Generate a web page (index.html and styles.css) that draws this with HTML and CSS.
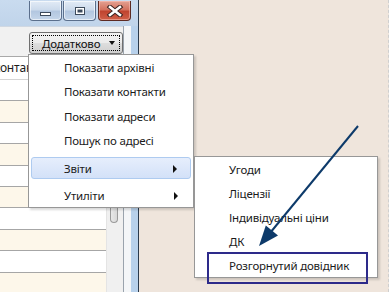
FILE: index.html
```html
<!DOCTYPE html>
<html>
<head>
<meta charset="utf-8">
<link rel="stylesheet" href="styles.css">
</head>
<body>
<div class="screen">
  <div class="window">
    <div class="titlebar">
      <div class="capbtns">
        <div class="capbtn min"><span class="min-ico"></span></div>
        <div class="capbtn max"><span class="max-ico"></span></div>
        <div class="capbtn close">
          <svg width="18" height="12" viewBox="0 0 18 12"><path d="M4 2 L14 10 M14 2 L4 10" stroke="#3a2320" stroke-width="4.6" stroke-linecap="square"/><path d="M4 2 L14 10 M14 2 L4 10" stroke="#ffffff" stroke-width="2.6" stroke-linecap="square"/></svg>
        </div>
      </div>
    </div>
    <div class="client">
      <div class="content">
        <div class="toolbar">
          <div class="more"><div class="focus"><span class="more-label">Додатково</span><span class="caret"></span></div></div>
        </div>
        <div class="grid">
          <div class="rows">
            <div class="hdr">контакти</div>
            <div class="row"></div>
            <div class="row alt"></div>
            <div class="row"></div>
            <div class="row alt"></div>
            <div class="row"></div>
            <div class="row alt"></div>
            <div class="row"></div>
            <div class="row alt"></div>
            <div class="row"></div>
            <div class="row alt"></div>
          </div>
          <div class="vscroll"><div class="thumb"></div></div>
        </div>
      </div>
      <div class="inner-edge"></div>
      <div class="frame"></div>
    </div>
  </div>
  <div class="desktop"></div>

  <div class="menu main">
    <div class="item">Показати архівні</div>
    <div class="item">Показати контакти</div>
    <div class="item">Показати адреси</div>
    <div class="item">Пошук по адресі</div>
    <div class="item sub hot">Звіти<span class="arr"></span></div>
    <div class="item sub last">Утиліти<span class="arr"></span></div>
  </div>

  <div class="menu submenu">
    <div class="item">Угоди</div>
    <div class="item">Ліцензії</div>
    <div class="item">Індивідуальні ціни</div>
    <div class="item">ДК</div>
    <div class="item">Розгорнутий довідник</div>
    <div class="mark"></div>
  </div>

  <svg class="pointer" width="389" height="292" viewBox="0 0 389 292">
    <line x1="358" y1="126" x2="270" y2="233" stroke="#0d3a6a" stroke-width="2"/>
    <polygon points="259,246 265.8,225.6 278,235.6" fill="#0d3a6a"/>
  </svg>
</div>
</body>
</html>
```
FILE: styles.css
```css
* { box-sizing: border-box; }
html, body { margin: 0; padding: 0; }
body {
  width: 389px;
  height: 292px;
  overflow: hidden;
  font-family: "Noto Sans", "Open Sans", sans-serif;
  font-size: 11.5px;
  letter-spacing: -0.2px;
  color: #1b1b1b;
}
.screen {
  position: relative;
  display: flex;
  width: 389px;
  height: 292px;
  background: #efe5dc;
}
.window {
  width: 139px;
  height: 292px;
  display: flex;
  flex-direction: column;
  border-right: 1px solid #2b3a4c;
  background: #bcd3ec;
}
.titlebar {
  height: 26px;
  background: linear-gradient(#c9dbef, #c0d4ea);
  display: flex;
  padding: 1px 0 0 29px;
}
.capbtns { display: flex; gap: 1px; height: 20px; }
.capbtn {
  width: 33px;
  height: 20px;
  border: 1px solid #5b6f8c;
  border-top: none;
  border-radius: 0 0 4px 4px;
  display: flex;
  align-items: center;
  justify-content: center;
  background: linear-gradient(#e2ebf6 0%, #cddbec 45%, #b3c7e0 55%, #c5d6ea 100%);
  box-shadow: inset 0 0 0 1px rgba(255,255,255,0.6);
}
.capbtn.close {
  width: 33px;
  margin-left: 1px;
  border-color: #5d2a22;
  background: linear-gradient(#e3a293 0%, #d4725f 45%, #c0442f 55%, #cf5f48 100%);
  box-shadow: inset 0 0 0 1px rgba(255,200,190,0.5);
}
.min-ico {
  width: 11px;
  height: 4px;
  margin-top: 6px;
  background: #fff;
  border: 1px solid #3c4a5c;
}
.max-ico {
  width: 10px;
  height: 8px;
  border: 1px solid #3c4a5c;
  background: #fff;
  box-shadow: inset 0 0 0 1.5px #fff, inset 0 0 0 3px #3c4a5c;
}
.client {
  flex: 1;
  display: flex;
  min-height: 0;
}
.content {
  width: 123px;
  display: flex;
  flex-direction: column;
  background: #f0f0f0;
  border-top: 1px solid #d0d8e2;
}
.toolbar {
  height: 30px;
  padding: 5px 0 0 29px;
  background: #f1f1f1;
  border-bottom: 1px solid #a9a9a9;
}
.more {
  width: 94px;
  height: 22px;
  border: 1px solid #707070;
  border-radius: 3px;
  background: linear-gradient(#f2f2f2 0%, #ebebeb 48%, #dddddd 52%, #cfcfcf 100%);
  padding: 2px;
}
.focus {
  height: 100%;
  border: 1px dotted #000;
  display: flex;
  align-items: center;
  padding-left: 9px;
  font-size: 11.5px;
  letter-spacing: -0.15px;
  color: #111;
}
.more-label { flex: 1; }
.caret {
  width: 0; height: 0;
  margin-right: 4px;
  border-left: 3.5px solid transparent;
  border-right: 3.5px solid transparent;
  border-top: 4px solid #111;
}
.grid {
  flex: 1;
  display: flex;
  min-height: 0;
}
.rows {
  width: 106px;
  display: flex;
  flex-direction: column;
  overflow: hidden;
}
.hdr {
  height: 23px;
  flex: none;
  background: #ffffff;
  border-bottom: 1px solid #d5d5d5;
  white-space: nowrap;
  line-height: 22px;
  margin-left: -6px;
  font-size: 12px;
  color: #1b1b1b;
}
.row {
  height: 21.4px;
  flex: none;
  background: #ffffff;
  border-bottom: 1px solid #a6a6a6;
}
.row.alt { background: #fdf7ea; }
.vscroll {
  width: 17px;
  background: #f0f0f0;
  border-left: 1px solid #e4e4e4;
  position: relative;
}
.thumb {
  margin: 0 0 0 3px;
  width: 8px;
  height: 166px;
  border: 1px solid #9a9a9a;
  border-top: none;
  border-radius: 0 0 4px 4px;
  background: linear-gradient(90deg, #e8e8e8, #d8d8d8);
}
.inner-edge {
  width: 8px;
  background: #f4f6f8;
  border-left: 1px solid #9aa3ad;
}
.frame {
  flex: 1;
  background: #b8d1eb;
}
.desktop {
  flex: 1;
  border-right: 1px dashed #cfcfcf;
}
.menu {
  position: absolute;
  background: #ffffff;
  border: 1px solid #979797;
  box-shadow: 2px 2px 2px rgba(0,0,0,0.15);
}
.menu.main {
  left: 28px;
  top: 54px;
  width: 166px;
  height: 154px;
  padding: 1px 2px;
}
.item {
  height: 24.3px;
  line-height: 24px;
  padding-left: 33px;
  position: relative;
  white-space: nowrap;
}
.item.sub { height: 22px; line-height: 21px; margin-top: 4px; }
.item.last { margin-top: 6px; }
.item.hot {
  background: linear-gradient(#e6eefc, #d3e1f8);
  border: 1px solid #aecbf0;
  border-radius: 3px;
  padding-left: 32px;
}
.arr {
  position: absolute;
  right: 13px;
  top: 7px;
  width: 0; height: 0;
  border-top: 4px solid transparent;
  border-bottom: 4px solid transparent;
  border-left: 4px solid #111;
}
.submenu {
  left: 194px;
  top: 156px;
  width: 184px;
  height: 122px;
  padding: 1px 2px;
}
.submenu .item { padding-left: 32px; height: 24px; }
.mark {
  position: absolute;
  left: 12px;
  top: 95px;
  width: 161px;
  height: 32px;
  border: 2px solid #2d2a8a;
}
.pointer {
  position: absolute;
  left: 0;
  top: 0;
  pointer-events: none;
}
```
